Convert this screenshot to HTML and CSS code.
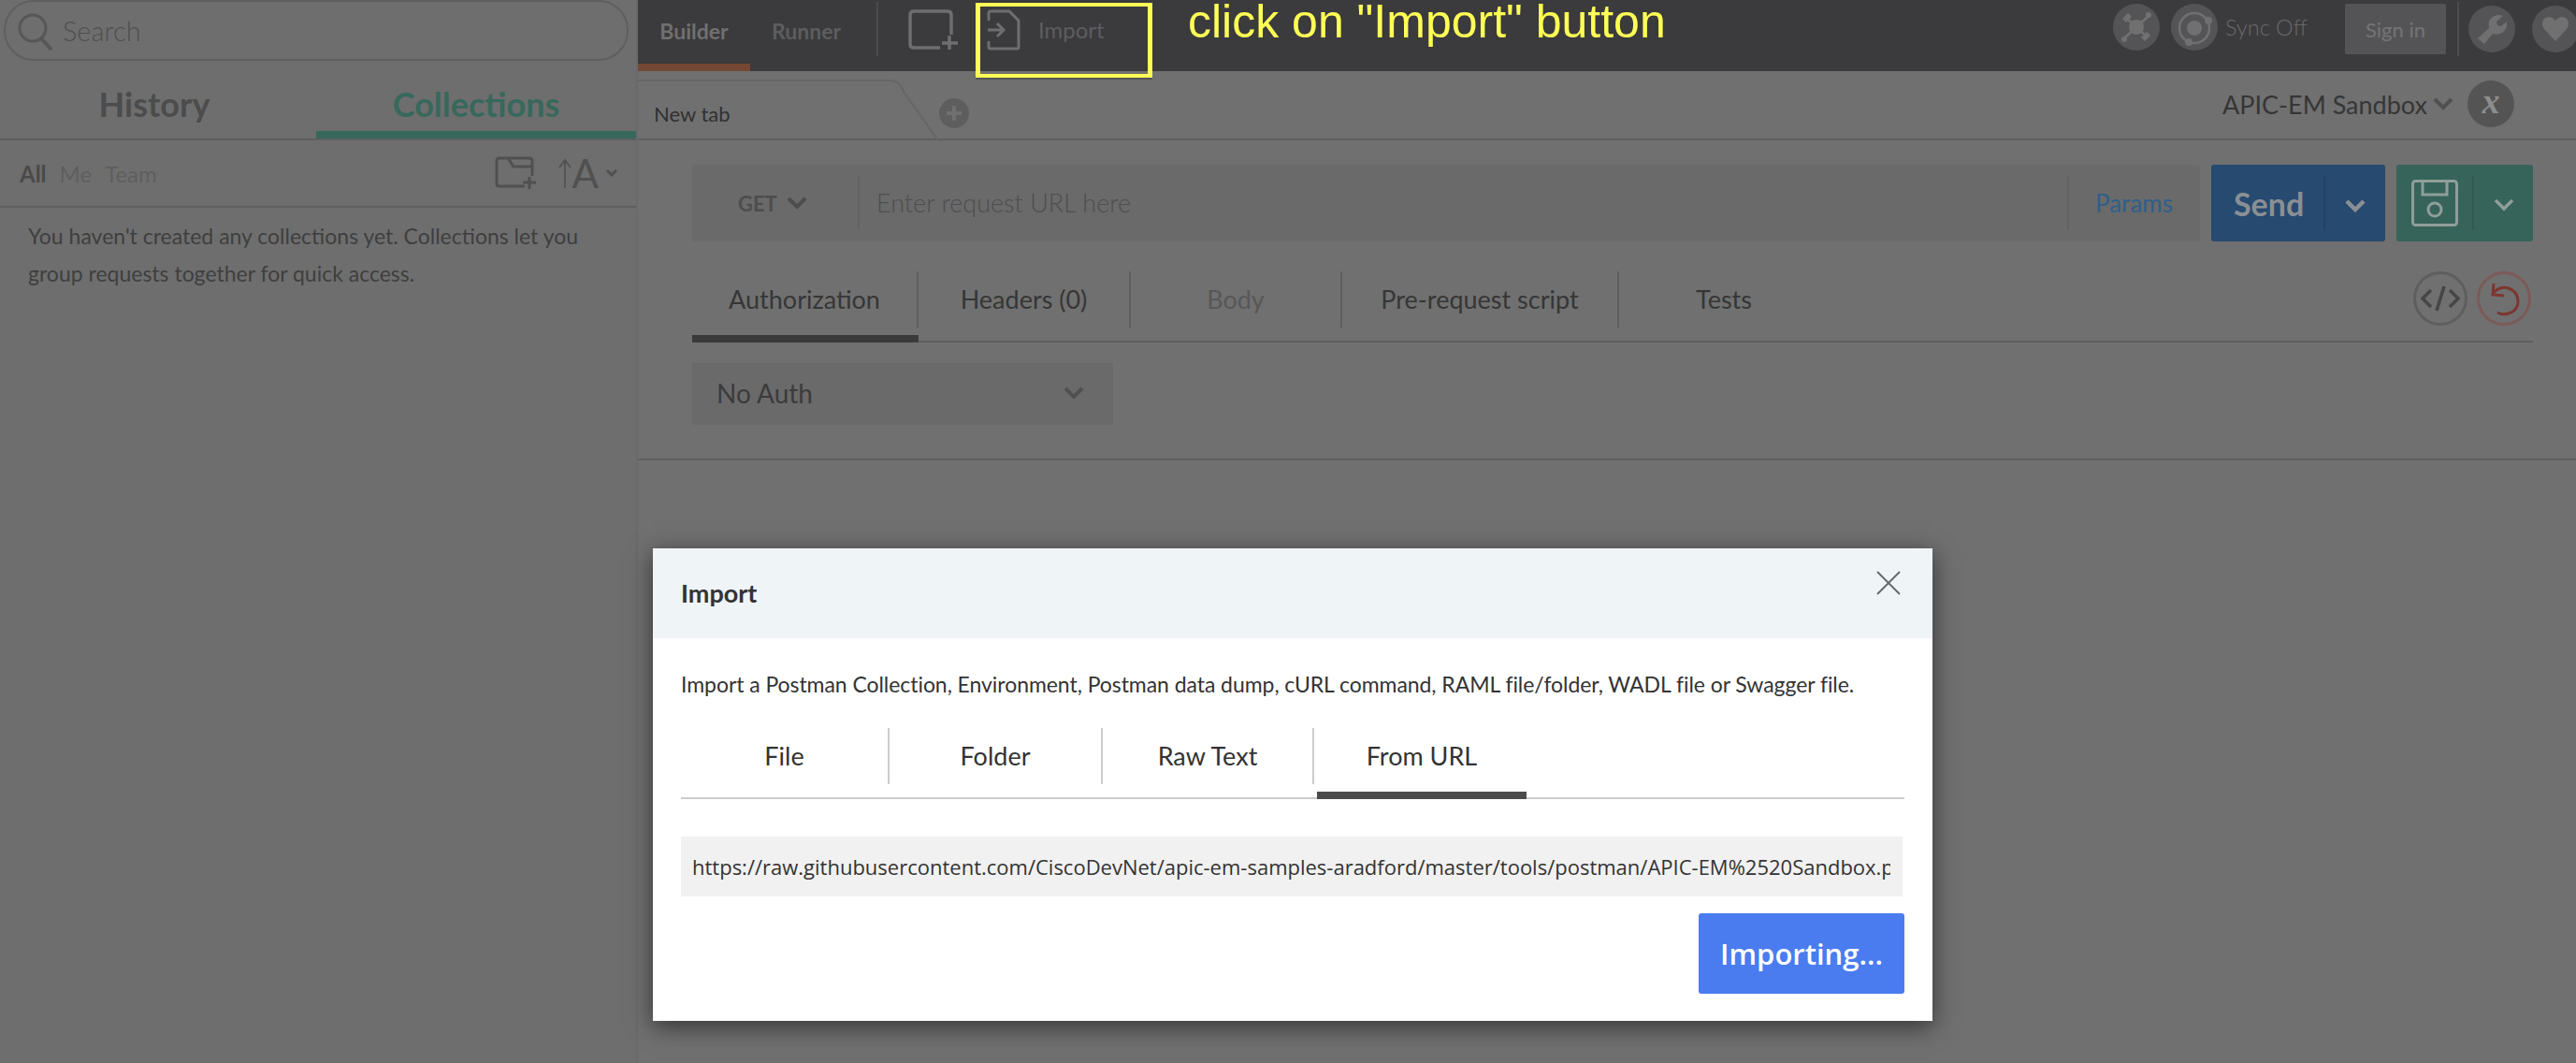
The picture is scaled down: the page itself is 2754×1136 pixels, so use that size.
FILE: index.html
```html
<!DOCTYPE html>
<html lang="en">
<head>
    <meta charset="UTF-8">
    <title>Postman - Import</title>
    <link rel="stylesheet" href="styles.css">
</head>
<body>
    <aside class="sidebar">
        <div class="search-wrap">
            <div class="search">
                <svg class="search-icon" width="40" height="42" viewBox="0 0 40 42"><circle cx="17" cy="16" r="14" fill="none" stroke="#575757" stroke-width="3"/><path d="M26 27l11 12" stroke="#575757" stroke-width="4" fill="none"/></svg>
                <span>Search</span>
            </div>
        </div>
        <div class="side-tabs">
            <div class="side-tab">History</div>
            <div class="side-tab active">Collections</div>
        </div>
        <div class="filters">
            <span class="filter strong">All</span>
            <span class="filter">Me</span>
            <span class="filter">Team</span>
            <div class="filter-tools">
                <svg width="46" height="36" viewBox="0 0 46 36"><path d="M32 32H5q-3 0-3-3V5q0-3 3-3h32q3 0 3 3v16M14 2l6 9h20" fill="none" stroke="#505050" stroke-width="3"/><path d="M37 22v13M30 28h14" stroke="#505050" stroke-width="3"/></svg>
                <svg class="sort-arrow" width="16" height="32" viewBox="0 0 16 32"><path d="M8 32V3M2 10l6-8 6 8" fill="none" stroke="#505050" stroke-width="1.6"/></svg>
                <span class="sort-a">A</span>
                <svg width="14" height="10" viewBox="0 0 14 10"><path d="M2 2l5 5 5-5" fill="none" stroke="#505050" stroke-width="3"/></svg>
            </div>
        </div>
        <p class="empty">You haven't created any collections yet. Collections let you group requests together for quick access.</p>
    </aside>

    <main class="main">
        <header class="topbar">
            <div class="mode active">Builder</div>
            <div class="mode">Runner</div>
            <div class="top-sep"></div>
            <svg class="new-icon" width="54" height="44" viewBox="0 0 54 44"><path d="M34 41H6q-4 0-4-4V6q0-4 4-4h36q4 0 4 4v21" fill="none" stroke="#6e6e6e" stroke-width="3.5"/><path d="M44 28v15M36 36h17" stroke="#6e6e6e" stroke-width="3.5"/></svg>
            <svg class="import-icon" width="36" height="44" viewBox="0 0 36 44"><path d="M2 12V4q0-2 2-2h20l10 10v28q0 2-2 2H4q-2 0-2-2v-6" fill="none" stroke="#6e6e6e" stroke-width="3"/><path d="M1 22h16M11 15l7 7-7 7" fill="none" stroke="#6e6e6e" stroke-width="3"/></svg>
            <span class="import-label">Import</span>
            <div class="top-right">
                <span class="round-btn">
                    <svg width="36" height="36" viewBox="0 0 36 36"><circle cx="18" cy="18" r="8" fill="#707070"/><path d="M6 7l24 22M30 7L6 29" stroke="#707070" stroke-width="3"/><path d="M3 9l6-6 4 4-6 6zM27 33l6-6-4-4-6 6z" fill="#707070"/><circle cx="31" cy="5" r="3" fill="#707070"/><circle cx="5" cy="31" r="3" fill="#707070"/></svg>
                </span>
                <span class="round-btn sync">
                    <svg width="42" height="42" viewBox="0 0 42 42"><circle cx="21" cy="22" r="16" fill="none" stroke="#707070" stroke-width="2.5"/><circle cx="21" cy="22" r="8" fill="#707070"/><circle cx="36" cy="14" r="4" fill="#707070"/><circle cx="15" cy="37" r="4" fill="#707070"/></svg>
                </span>
                <span class="sync-label">Sync Off</span>
                <span class="sign-in">Sign in</span>
                <div class="top-sep right"></div>
                <span class="round-btn wrench">
                    <svg width="34" height="34" viewBox="0 0 34 34"><path d="M2 27L14 16Q12 6 20 3q5-2 9 0l-7 6q0 5 5 5l6-5q1 8-5 12-5 3-10 1L9 33z" fill="#707070"/></svg>
                </span>
                <span class="round-btn heart">
                    <svg width="30" height="28" viewBox="0 0 30 28"><path d="M15 27L3 14Q-1 8 3 3q6-5 12 2 6-7 12-2 4 5 0 11z" fill="#707070"/></svg>
                </span>
            </div>
        </header>

        <div class="tab-row">
            <div class="req-tab">
                <svg class="req-tab-shape" width="322" height="66" viewBox="0 0 322 66"><path d="M0 2h270q10 0 14 12l37 52" fill="none" stroke="#666" stroke-width="2"/></svg>
                <span>New tab</span>
            </div>
            <span class="add-tab">
                <svg width="18" height="18" viewBox="0 0 18 18"><path d="M9 1v16M1 9h16" stroke="#707070" stroke-width="4"/></svg>
            </span>
            <div class="env">
                <span>APIC-EM Sandbox</span>
                <svg width="22" height="14" viewBox="0 0 22 14"><path d="M2 2l9 9 9-9" fill="none" stroke="#505050" stroke-width="4"/></svg>
                <span class="env-x">x</span>
            </div>
        </div>

        <div class="request">
            <div class="url-bar">
                <div class="method">
                    <span>GET</span>
                    <svg width="22" height="14" viewBox="0 0 22 14"><path d="M2 2l9 9 9-9" fill="none" stroke="#4d4d4d" stroke-width="4"/></svg>
                </div>
                <div class="url-input">Enter request URL here</div>
                <div class="params">Params</div>
            </div>
            <div class="send">
                <span class="send-label">Send</span>
                <span class="send-arrow">
                    <svg width="22" height="14" viewBox="0 0 22 14"><path d="M2 2l9 9 9-9" fill="none" stroke="#8a8f94" stroke-width="4.5"/></svg>
                </span>
            </div>
            <div class="save">
                <span class="save-icon">
                    <svg width="50" height="50" viewBox="0 0 50 50"><rect x="1.5" y="1.5" width="47" height="47" rx="3" fill="none" stroke="#8f9e99" stroke-width="3"/><path d="M12 2v14h26V2" fill="none" stroke="#8f9e99" stroke-width="3"/><circle cx="25" cy="32" r="7" fill="none" stroke="#8f9e99" stroke-width="3"/></svg>
                </span>
                <span class="save-arrow">
                    <svg width="22" height="14" viewBox="0 0 22 14"><path d="M2 2l9 9 9-9" fill="none" stroke="#8f9e99" stroke-width="3.5"/></svg>
                </span>
            </div>
        </div>

        <div class="sub-tabs">
            <div class="sub-tab active"><span>Authorization</span></div>
            <div class="sub-tab"><span>Headers (0)</span></div>
            <div class="sub-tab muted"><span>Body</span></div>
            <div class="sub-tab"><span>Pre-request script</span></div>
            <div class="sub-tab last"><span>Tests</span></div>
            <div class="sub-tools">
                <span class="code-btn">
                    <svg width="44" height="30" viewBox="0 0 44 30"><path d="M12 6l-9 9 9 9M32 6l9 9-9 9" fill="none" stroke="#464646" stroke-width="3.5"/><path d="M26 2l-8 26" stroke="#464646" stroke-width="3.5"/></svg>
                </span>
                <span class="undo-btn">
                    <svg width="34" height="38" viewBox="0 0 34 38"><path d="M6 3l-1 12 12 1" fill="none" stroke="#7d3630" stroke-width="3"/><path d="M5 14Q12 5 22 8q10 4 10 14 0 10-10 13-7 2-12-1" fill="none" stroke="#7d3630" stroke-width="3"/></svg>
                </span>
            </div>
        </div>

        <div class="auth-row">
            <div class="auth-select">
                <span>No Auth</span>
                <svg width="22" height="14" viewBox="0 0 22 14"><path d="M2 2l9 9 9-9" fill="none" stroke="#505050" stroke-width="4"/></svg>
            </div>
        </div>
    </main>

    <div class="callout"></div>
    <div class="callout-text">click on "Import" button</div>

    <section class="modal">
        <div class="modal-head">
            <h2>Import</h2>
            <svg class="modal-close" width="26" height="26" viewBox="0 0 26 26"><path d="M1 1l24 24M25 1L1 25" stroke="#666" stroke-width="1.8"/></svg>
        </div>
        <div class="modal-body">
            <p class="modal-desc">Import a Postman Collection, Environment, Postman data dump, cURL command, RAML file/folder, WADL file or Swagger file.</p>
            <div class="modal-tabs">
                <div class="modal-tab"><span>File</span></div>
                <div class="modal-tab"><span>Folder</span></div>
                <div class="modal-tab"><span>Raw Text</span></div>
                <div class="modal-tab active"><span>From URL</span></div>
            </div>
            <div class="url-field"><span>https://raw.githubusercontent.com/CiscoDevNet/apic-em-samples-aradford/master/tools/postman/APIC-EM%2520Sandbox.postman_collection.json</span></div>
            <div class="modal-actions">
                <button class="import-btn" type="button">Importing...</button>
            </div>
        </div>
    </section>
</body>
</html>
```

FILE: styles.css
```css
html, body {
    height: 100%;
}
body {
    margin: 0;
    display: flex;
    height: 1136px;
    overflow: hidden;
    background-color: #707070;
    color: #363636;
    font-family: Lato, "Open Sans", sans-serif;
}

/* sidebar */
.sidebar {
    width: 680px;
    flex: none;
    background-color: #6e6e6e;
    border-right: 2px solid #6a6a6a;
}
.search-wrap {
    height: 76px;
    padding: 0 8px 0 4px;
    box-sizing: border-box;
}
.search {
    height: 65px;
    box-sizing: border-box;
    border: 2px solid #5f5f5f;
    border-radius: 32px;
    display: flex;
    align-items: center;
    padding: 0 0 0 12px;
    font-size: 29px;
    font-weight: 300;
    color: #4f4f4f;
}
.search-icon {
    margin-right: 9px;
    margin-top: 4px;
}
.side-tabs {
    display: flex;
    height: 74px;
    box-sizing: border-box;
    border-bottom: 2px solid #5f5f5f;
}
.side-tab {
    flex: 1;
    height: 72px;
    box-sizing: border-box;
    padding-bottom: 2px;
    display: flex;
    align-items: center;
    justify-content: center;
    font-size: 36px;
    font-weight: 700;
    color: #4c4c4c;
}
.side-tab:first-child {
    flex: none;
    width: 338px;
    padding-right: 8px;
}
.side-tab.active {
    color: #37685c;
    box-shadow: inset 0 -8px 0 #37685c;
}
.filters {
    height: 72px;
    box-sizing: border-box;
    border-bottom: 2px solid #5f5f5f;
    display: flex;
    align-items: center;
    padding: 0 19px 0 21px;
    font-size: 24px;
    color: #5e5e5e;
}
.filter {
    margin-right: 14px;
}
.filter.strong {
    font-weight: 700;
    color: #4a4a4a;
}
.filter-tools {
    margin-left: auto;
    display: flex;
    align-items: center;
}
.sort-arrow {
    margin-left: 21px;
}
.sort-a {
    font-size: 42px;
    font-weight: 400;
    color: #505050;
    line-height: 1;
    margin-right: 7px;
}
.empty {
    margin: 10px 30px 0;
    font-size: 23px;
    line-height: 40px;
    color: #3f3f3f;
}

/* top bar */
.main {
    flex: 1;
    min-width: 0;
}
.topbar {
    height: 76px;
    background-color: #3b3a3d;
    display: flex;
    align-items: flex-start;
}
.mode {
    width: 120px;
    height: 76px;
    box-sizing: border-box;
    padding-bottom: 10px;
    display: flex;
    align-items: center;
    justify-content: center;
    font-size: 23px;
    font-weight: 700;
    color: #5d5d5d;
}
.mode.active {
    color: #707070;
    box-shadow: inset 0 -8px 0 #744832;
}
.top-sep {
    width: 2px;
    height: 58px;
    margin: 2px 0 0 15px;
    background-color: #4b4a4d;
}
.top-sep.right {
    margin: 2px 0 0 12px;
}
.new-icon {
    margin: 10px 0 0 32px;
}
.import-icon {
    margin: 10px 0 0 30px;
}
.import-label {
    margin: 17px 0 0 19px;
    font-size: 24px;
    color: #5d5d5d;
}
.top-right {
    margin-left: auto;
    display: flex;
    align-items: flex-start;
}
.round-btn {
    width: 50px;
    height: 50px;
    border-radius: 50%;
    background-color: #545456;
    display: flex;
    align-items: center;
    justify-content: center;
    margin-top: 4px;
}
.round-btn.sync {
    margin-left: 12px;
}
.sync-label {
    margin: 15px 0 0 8px;
    width: 128px;
    font-size: 23.5px;
    font-weight: 300;
    color: #6a6a6a;
}
.sign-in {
    width: 108px;
    height: 54px;
    margin-top: 4px;
    border-radius: 2px;
    background-color: #545456;
    display: flex;
    align-items: center;
    justify-content: center;
    font-size: 22px;
    color: #747474;
}
.round-btn.wrench {
    margin: 6px 0 0 10px;
}
.round-btn.heart {
    margin: 6px -3px 0 18px;
}

/* request tabs */
.tab-row {
    height: 74px;
    box-sizing: border-box;
    border-bottom: 2px solid #5f5f5f;
    display: flex;
    align-items: center;
}
.req-tab {
    position: relative;
    width: 320px;
    height: 72px;
    display: flex;
    align-items: center;
    padding: 18px 0 0 17px;
    box-sizing: border-box;
    font-size: 22px;
    color: #303030;
}
.req-tab-shape {
    position: absolute;
    left: 0;
    top: 8px;
}
.add-tab {
    width: 32px;
    height: 32px;
    margin: 18px 0 0 2px;
    border-radius: 50%;
    background-color: #5e5e5e;
    display: flex;
    align-items: center;
    justify-content: center;
}
.env {
    margin-left: auto;
    margin-right: 66px;
    margin-bottom: 2px;
    display: flex;
    align-items: center;
    font-size: 27px;
    color: #363636;
}
.env svg {
    margin-left: 6px;
}
.env-x {
    width: 50px;
    height: 50px;
    margin-left: 15px;
    border-radius: 50%;
    background-color: #545454;
    color: #8d8d8d;
    display: flex;
    align-items: center;
    justify-content: center;
    font-family: "Liberation Serif", serif;
    font-style: italic;
    font-weight: 700;
    font-size: 38px;
    line-height: 1;
    padding-bottom: 6px;
    box-sizing: border-box;
}

/* request bar */
.request {
    display: flex;
    gap: 12px;
    margin: 26px 46px 0 58px;
    height: 82px;
}
.url-bar {
    flex: 1;
    display: flex;
    align-items: center;
    background-color: #6a6a6a;
    border-radius: 3px;
}
.method {
    width: 179px;
    height: 58px;
    box-sizing: border-box;
    padding-left: 49px;
    border-right: 2px solid #626262;
    display: flex;
    align-items: center;
    gap: 10px;
    font-size: 22px;
    font-weight: 700;
    color: #4d4d4d;
}
.url-input {
    flex: 1;
    padding-left: 18px;
    padding-bottom: 2px;
    font-size: 27px;
    font-weight: 300;
    color: #4e4e4e;
}
.params {
    width: 142px;
    height: 58px;
    box-sizing: border-box;
    border-left: 2px solid #626262;
    padding-left: 28px;
    display: flex;
    align-items: center;
    font-size: 26px;
    color: #2e5f8c;
}
.send {
    width: 186px;
    display: flex;
    align-items: center;
    background-color: #274a70;
    border-radius: 3px;
}
.send-label {
    width: 122px;
    box-sizing: border-box;
    height: 58px;
    border-right: 2px solid #234266;
    padding-left: 24px;
    display: flex;
    align-items: center;
    font-size: 34px;
    font-weight: 700;
    color: #8a8f94;
}
.send-arrow {
    flex: 1;
    display: flex;
    justify-content: center;
    margin-top: 6px;
}
.save {
    width: 146px;
    display: flex;
    align-items: center;
    background-color: #36635a;
    border-radius: 3px;
}
.save-icon {
    width: 83px;
    height: 58px;
    box-sizing: border-box;
    border-right: 2px solid #315950;
    padding-left: 16px;
    display: flex;
    align-items: center;
}
.save-arrow {
    flex: 1;
    display: flex;
    justify-content: center;
    margin-top: 4px;
}

/* request sub tabs */
.sub-tabs {
    display: flex;
    margin: 32px 46px 0 58px;
    height: 74px;
    border-bottom: 2px solid #5f5f5f;
}
.sub-tab {
    width: 227px;
    height: 76px;
    box-sizing: border-box;
    padding-bottom: 16px;
    font-size: 27px;
    color: #363636;
}
.sub-tab span {
    height: 58px;
    padding-bottom: 2px;
    display: flex;
    align-items: center;
    justify-content: center;
    border-right: 2px solid #5f5f5f;
}
.sub-tab.active {
    width: 242px;
    box-shadow: inset 0 -8px 0 #3a3a3a;
}
.sub-tab.muted {
    width: 226px;
    color: #575757;
}
.sub-tab:nth-child(4) {
    width: 296px;
}
.sub-tab.last {
    width: 224px;
}
.sub-tab.last span {
    border-right: none;
}
.sub-tools {
    margin-left: auto;
    margin-right: 2px;
    display: flex;
    gap: 10px;
}
.code-btn, .undo-btn {
    width: 58px;
    height: 58px;
    box-sizing: border-box;
    border-radius: 50%;
    border: 3px solid #5e5e5e;
    display: flex;
    align-items: center;
    justify-content: center;
}
.undo-btn {
    border-color: #7b5a58;
}

/* auth */
.auth-row {
    margin-top: 22px;
    padding: 0 0 36px 58px;
    border-bottom: 2px solid #5f5f5f;
}
.auth-select {
    width: 450px;
    height: 66px;
    box-sizing: border-box;
    padding: 0 31px 2px 26px;
    background-color: #6a6a6a;
    display: flex;
    align-items: center;
    justify-content: space-between;
    font-size: 28px;
    color: #3b3b3b;
}

/* annotation drawn on top of the screenshot */
.callout {
    position: absolute;
    left: 1043px;
    top: 3px;
    width: 189px;
    height: 80px;
    box-sizing: border-box;
    border-style: solid;
    border-width: 4px 5px;
    border-color: #ffff55;
    box-shadow: 0 2px 0 #555;
}
.callout-text {
    position: absolute;
    left: 1270px;
    top: 0;
    font-family: "Liberation Sans", Arial, sans-serif;
    font-size: 50px;
    line-height: 46px;
    color: #ffff55;
    white-space: nowrap;
}

/* modal */
.modal {
    position: absolute;
    left: 698px;
    top: 586px;
    width: 1368px;
    height: 505px;
    background-color: #fff;
    box-shadow: 0 6px 24px rgba(0, 0, 0, 0.55);
}
.modal-head {
    position: relative;
    height: 96px;
    box-sizing: border-box;
    padding: 0 30px;
    background-color: #eff4f7;
    display: flex;
    align-items: center;
}
.modal-head h2 {
    margin: 0 0 2px;
    font-size: 27px;
    font-weight: 700;
    color: #333;
}
.modal-close {
    position: absolute;
    left: 1308px;
    top: 24px;
}
.modal-body {
    padding: 0 30px;
}
.modal-desc {
    margin: 0;
    height: 96px;
    box-sizing: border-box;
    padding-top: 34px;
    line-height: 30px;
    font-size: 23px;
    letter-spacing: -0.06px;
    white-space: nowrap;
    color: #333;
}
.modal-tabs {
    display: flex;
    height: 74px;
    border-bottom: 2px solid #ccc;
}
.modal-tab {
    width: 223px;
    height: 76px;
    box-sizing: border-box;
    padding-bottom: 16px;
    font-size: 27px;
    color: #333;
}
.modal-tab:nth-child(2) {
    width: 228px;
}
.modal-tab:nth-child(3) {
    width: 226px;
}
.modal-tab span {
    height: 58px;
    padding-bottom: 2px;
    display: flex;
    align-items: center;
    justify-content: center;
    border-right: 2px solid #ccc;
}
.modal-tab.active {
    width: 224px;
    margin-left: 3px;
    box-shadow: inset 0 -8px 0 #4b4b4b;
}
.modal-tab.active span {
    border-right: none;
}
.url-field {
    margin-top: 40px;
    height: 64px;
    box-sizing: border-box;
    padding: 0 13px 0 12px;
    background-color: #f1f1f1;
    display: flex;
    align-items: center;
    width: 1306px;
    font-family: "Open Sans", sans-serif;
    font-size: 22px;
    color: #333;
}
.url-field span {
    overflow: hidden;
    white-space: nowrap;
}
.modal-actions {
    margin-top: 18px;
    display: flex;
    justify-content: flex-end;
}
.import-btn {
    width: 220px;
    height: 86px;
    padding: 0;
    border: none;
    border-radius: 3px;
    background-color: #4a7cf0;
    color: #fff;
    font-family: "Open Sans", sans-serif;
    font-size: 31px;
    font-weight: 600;
}
```
